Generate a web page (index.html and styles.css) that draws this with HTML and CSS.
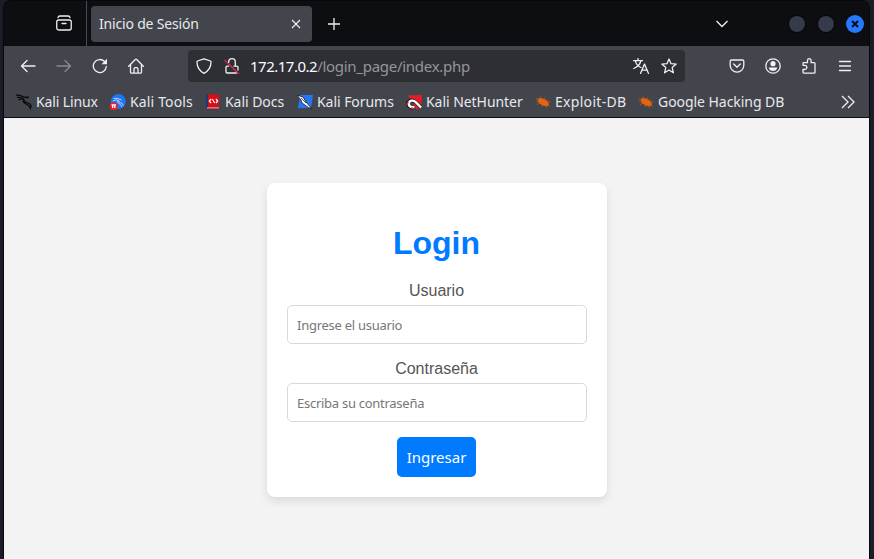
FILE: index.html
```html
<!DOCTYPE html>
<html lang="es">
<head>
<meta charset="utf-8">
<title>Inicio de Sesión</title>
<link rel="stylesheet" href="styles.css">
</head>
<body>
<svg class="defs" width="0" height="0" aria-hidden="true">
  <symbol id="bug" viewBox="0 0 16 16"><path fill="#e8630f" d="M2.500 5.500 4.500 4 8 4.500l3 1.500 2.500 2.500.3 3-2.800.7-4-1-3.500-2.500z"/><path fill="none" stroke="#c45c1c" stroke-width=".7" d="M1 4.300 4 5.500M.5 7l4 .3M2 10.500 5.500 9M5 2.500l1.500 3M9.500 3.500 9 6M12.500 5 11 7.500M15.500 8h-3M7 13l1-2M11.500 14v-2.500M15 12.500l-2-1"/></symbol>
</svg>
<div class="window">
  <header class="tabs">
    <div class="view"><svg class="icon" viewBox="0 0 16 16"><rect x=".75" y="5" width="14.500" height="10" rx="2"/><path d="M2 2.700q.3-1.700 2-1.700h8q1.700 0 2 1.700M6 8.500h4"/></svg></div>
    <div class="tab"><span>Inicio de Sesión</span><svg class="close" viewBox="0 0 10 10"><path d="m1 1 8 8m0-8L1 9"/></svg></div>
    <svg class="plus" viewBox="0 0 12 12"><path d="M6 0v12M0 6h12"/></svg>
    <svg class="chevron" viewBox="0 0 14 8"><path d="m1.500 1 5.500 5.500L12.500 1"/></svg>
    <div class="controls"><i></i><i></i><b><svg viewBox="0 0 8 8"><path d="m1 1 6 6m0-6L1 7"/></svg></b></div>
  </header>
  <nav class="toolbar">
    <svg class="icon back" viewBox="0 0 16 16"><path d="M15 8H1.500M7 2.500 1.500 8 7 13.500"/></svg>
    <svg class="icon forward" viewBox="0 0 16 16"><path d="M1 8h13.500M9 2.500 14.500 8 9 13.500"/></svg>
    <svg class="icon reload" viewBox="0 0 16 16"><path d="M14.300 8.500A6.500 6.500 0 1 1 12.500 3.500L14 5"/><path class="solid" d="M15 .8v5.400H9.500z"/></svg>
    <svg class="icon home" viewBox="0 0 16 16"><path d="M.7 8.300 7.300 1.500q.7-.6 1.400 0l6.600 6.800M2.500 7v7q0 1.200 1.200 1.200h8.600q1.200 0 1.200-1.200V7M6 15v-4q0-1.300 1.300-1.300h1.400Q10 9.700 10 11v4"/></svg>
    <div class="address">
      <svg class="icon" viewBox="0 0 16 16"><path d="M8 .8 14.500 3q.5.2.5.8c0 5-2 9-7 11.500C3 12.800 1 8.800 1 3.800Q1 3.200 1.500 3z"/></svg>
      <svg class="icon lock" viewBox="0 0 16 16"><path d="M4.700 4.500V4a3.300 3.300 0 0 1 6.600 0v3.500M4.500 8.200H3.200q-1.200 0-1.200 1.200v4.400Q2 15 3.200 15h9.300M10 8.200h2.600q1.400 0 1.400 1.200v2.600"/><path class="slash" d="m1 2.500 13.500 13"/></svg>
      <span class="url"><em>172.17.0.2</em>/login_page/index.php</span>
      <svg class="icon" viewBox="0 0 16 16"><path d="M.5 2.700h9M5 .5v2M2.500 3C3 6.500 5.500 8.500 8 9.500M7.800 3C7 6.500 4 9 .8 10.500M7.500 15.500l4-9.500 4 9.500M9 12.200h5"/></svg>
      <svg class="icon star" viewBox="0 0 16 16"><path d="m8 1 2 4.700 5.200.4-4 3.500 1.200 5.200L8 12l-4.400 2.800 1.200-5.200-4-3.500L6 5.700z"/></svg>
    </div>
    <svg class="icon pocket" viewBox="0 0 16 16"><path d="M2.500 2h11q1.300 0 1.300 1.300v4a6.800 6.800 0 0 1-13.600 0v-4Q1.200 2 2.500 2zM4.700 6 8 9.200 11.300 6"/></svg>
    <svg class="icon account" viewBox="0 0 16 16"><circle cx="8" cy="8" r="7.200"/><circle class="solid" cx="8" cy="5.700" r="2.600"/><path class="solid" d="M3.800 9.500h8.400c-.3 2.400-2 3.500-4.200 3.500s-3.900-1.100-4.200-3.500z"/></svg>
    <svg class="icon extensions" viewBox="0 0 16 16"><path d="M2 7V5.500q0-.8.800-.8h3.700V2.500a1.800 1.800 0 0 1 3.600 0v2.200h3q.9 0 .9.900v8.600q0 .9-.9.900H2.800q-.8 0-.8-.8v-2.800h1.700a2.100 2.100 0 0 0 0-4.200H2z"/></svg>
    <svg class="icon menu" viewBox="0 0 16 16"><path d="M2.500 3.500h11M2.500 8h11M2.500 12.500h11"/></svg>
  </nav>
  <nav class="bookmarks">
    <a class="linux"><svg viewBox="0 0 16 16"><path fill="none" stroke="#08090b" stroke-width="1.200" d="M0 1.200q4-.7 7 1.500L12 4M1 3.500q4-.5 7 1.800M2.500 6Q6 4 8 6c0 4 6 1.500 7 5.500M8 6C4.500 10 14.500 9 14.500 15.500M10 3l3 .2M13 12l3 1"/></svg><span>Kali Linux</span></a>
    <a class="tools"><svg viewBox="0 0 16 16"><circle cx="8.300" cy="7.500" r="7.400" fill="#1f75f5"/><path fill="none" stroke="#dceaff" stroke-width=".8" d="M3.500 4.500q4-1 8 1.500M3 7q4-2 5.500-.5c0 3 4 1.500 5 5M8 6.500c-2 3.500 3 2.500 4 6.500"/><rect y="8.500" width="7.500" height="7.500" rx="2.500" fill="#e8232c"/><path fill="none" stroke="#fff" d="M1.500 10.800H6M2.700 11v3M4.800 11v3"/></svg><span>Kali Tools</span></a>
    <a class="docs"><svg viewBox="0 0 16 16"><path fill="#21367a" d="M1 .5h3v13.500H1z"/><path fill="#d90d15" d="M3 .5h11v13H3z"/><path fill="#ddd" d="M2 13.500h12v1.200H2z"/><path fill="#a20c17" d="M1.500 14.500H14v1H1.500z"/><path fill="none" stroke="#fff" stroke-width="1.200" d="M6 5 4.300 7 6 9m5-4 1.700 2L11 9M7.300 5l2.400 4"/></svg><span>Kali Docs</span></a>
    <a class="forums"><svg viewBox="0 0 16 16"><path fill="#2376f8" d="M3 1h13l-2 13H1z"/><path fill="#fff" stroke="#15181d" stroke-width=".8" d="M0 1.200 6 3l3 5 6 7-3.500-1.500L5 9 4 6z"/><path fill="none" stroke="#15181d" stroke-width=".7" d="m4 4 5 5"/></svg><span>Kali Forums</span></a>
    <a class="hunter"><svg viewBox="0 0 16 16"><path fill="#e41d2b" d="M2 1.500 16 1l-1 13-5 1z"/><path fill="none" stroke="#191b20" stroke-width="3.800" d="m14.500 13-4-4C8 6.500 5 6 3 7.500S1.500 12 5 13.500l3 .3"/><path fill="none" stroke="#fff" stroke-width="2.400" d="m15 13.500-4.500-4.700C8 6.300 5 6 3.500 7.700s-1 4.300 1.800 5.300l3 .3"/><path stroke="#d32b43" stroke-width="1.500" d="m5 14 3 .8M2 8l-1 3"/></svg><span>Kali NetHunter</span></a>
    <a class="exploit"><svg><use href="#bug"/></svg><span>Exploit-DB</span></a>
    <a class="google"><svg><use href="#bug"/></svg><span>Google Hacking DB</span></a>
    <svg class="more" viewBox="0 0 14 14"><path d="m1 1 6 6-6 6M7 1l6 6-6 6"/></svg>
  </nav>
  <main class="page">
    <form class="card">
      <h1>Login</h1>
      <label for="user">Usuario</label>
      <input id="user" type="text" placeholder="Ingrese el usuario">
      <label for="password">Contraseña</label>
      <input id="password" type="password" placeholder="Escriba su contraseña">
      <button type="button">Ingresar</button>
    </form>
  </main>
</div>
</body>
</html>
```
FILE: styles.css
```css
* { box-sizing: border-box; }
body {
  margin: 0;
  height: 559px;
  padding: 1px 5px 0 4px;
  overflow: hidden;
  background: #1a1d27;
  font-family: "Noto Sans", sans-serif;
  font-size: 14px;
  color: #e8e8eb;
}
.defs { display: none; }
.window {
  height: 558px;
  display: flex;
  flex-direction: column;
  border-radius: 7px 7px 0 0;
  overflow: hidden;
  box-shadow: 0 0 0 1px #07080c;
}
svg { display: block; flex: none; fill: none; stroke: #f0f0f3; stroke-width: 1.300; }
.icon { width: 16px; height: 16px; stroke-linecap: round; stroke-linejoin: round; }
.solid { fill: #f0f0f3; stroke: none; }

.tabs { height: 45px; flex: none; display: flex; align-items: center; background: #0c0e12; }
.view { width: 83px; height: 45px; padding: 14px 0 0 52px; border-right: 1px solid #4b4c52; }
.tab {
  width: 221px; height: 36px; margin-left: 4px; padding: 0 11px 0 8px;
  display: flex; align-items: center; justify-content: space-between;
  border-radius: 4px; background: #42454c;
}
.tab span { letter-spacing: -.18px; white-space: nowrap; }
.close { width: 10px; height: 10px; stroke-width: 1.100; }
.plus { width: 12px; height: 12px; margin-left: 16px; }
.chevron { width: 14px; height: 8px; margin-left: 375px; }
.controls { display: flex; align-items: center; margin-left: 60px; }
.controls i { width: 16px; height: 16px; border-radius: 50%; background: #353b49; margin-right: 13px; box-shadow: 0 0 0 1px #050608; }
.controls b { width: 18px; height: 18px; margin-left: -1px; border-radius: 50%; background: #2777ff; display: grid; place-items: center; }
.controls b svg { width: 8px; height: 8px; stroke: #08101d; stroke-width: 2; }

.toolbar { height: 40px; flex: none; display: flex; align-items: center; padding-left: 16px; background: #42454c; }
.forward { margin-left: 20px; opacity: .4; }
.reload { margin-left: 20px; }
.home { margin-left: 20px; }
.address {
  width: 497px; height: 32px; margin-left: 44px; padding: 0 8px;
  display: flex; align-items: center; border-radius: 4px; background: #2e2f35;
}
.lock { margin-left: 12px; }
.slash { stroke: #e22850; }
.url { flex: 1; margin-left: 10px; font-size: 15px; letter-spacing: -.48px; color: #94959a; white-space: nowrap; }
.url em { font-style: normal; color: #fbfbfe; letter-spacing: -.5px; }
.url { letter-spacing: -.28px; }
.star { margin-left: 12px; }
.pocket { margin-left: 44px; }
.account { margin-left: 20px; }
.extensions { margin-left: 20px; }
.menu { margin-left: 20px; }

.bookmarks {
  height: 32px; flex: none; display: flex; align-items: center; gap: 12px; padding-left: 12px;
  background: #42454c; border-bottom: 1px solid #0c0c12;
}
.bookmarks a { display: flex; align-items: center; gap: 4px; white-space: nowrap; letter-spacing: -.05px; }
.bookmarks a svg { width: 16px; height: 16px; stroke: none; }
.bookmarks .linux { width: 82px; letter-spacing: -.12px; }
.bookmarks .tools { width: 83px; letter-spacing: .15px; }
.docs { width: 80px; }
.forums { width: 97px; }
.hunter { width: 117px; }
.bookmarks .exploit { width: 91px; letter-spacing: .3px; }
.google { width: 146px; }
.more { width: 14px; height: 14px; margin-left: 45px; }

.page { flex: 1; padding-top: 65px; background: #f3f3f3; }
.card {
  width: 340px; height: 314px; margin: 0 auto 0 263px; padding: 20px;
  display: flex; flex-direction: column; align-items: center;
  border-radius: 8px; background: #fff; box-shadow: 0 4px 8px rgba(0, 0, 0, .1);
  font-family: "Liberation Sans", sans-serif; color: #555;
}
h1 { margin: 22px 1px 20px 0; font-size: 32px; line-height: 37px; color: #007bff; }
label { margin: 0 1px 5px 0; font-size: 16px; line-height: 18px; }
input {
  width: 300px; height: 39px; margin: 0 0 16px; padding: 0 9px; flex: none;
  border: 1px solid #d9d9d9; border-radius: 5px; background: #fff;
  font: 13px "Noto Sans", sans-serif; letter-spacing: -.27px;
}
input::placeholder { color: #777; opacity: 1; }
button {
  width: 79px; height: 40px; margin: -1px 1px 0 0; padding: 0 0 1px; flex: none;
  border: 0; border-radius: 5px; background: #007bff; color: #fff;
  font: 15px "Noto Sans", sans-serif;
}
```
